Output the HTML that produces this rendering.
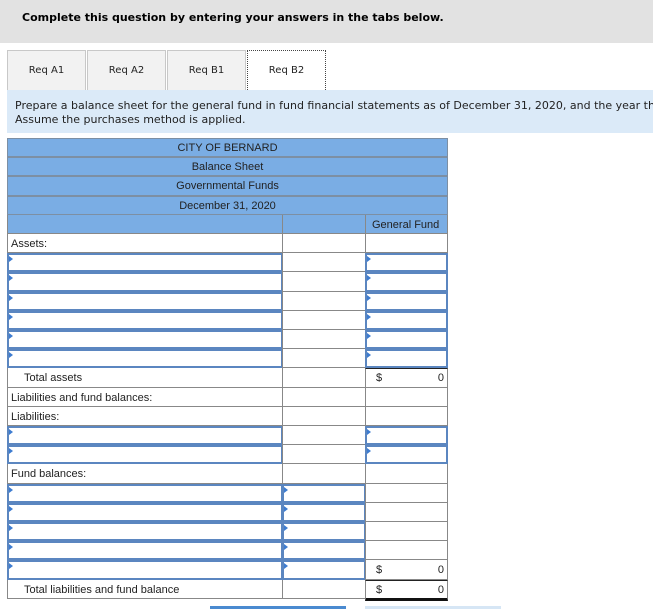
<!DOCTYPE html>
<html><head><style>
body{margin:0;width:653px;height:609px;overflow:hidden;background:#fff;font-family:"Liberation Sans",Arial,sans-serif;position:relative}
.top{position:absolute;left:0;top:0;width:653px;height:43px;background:#e2e2e2}
.top b{position:absolute;left:22px;top:11px;font-family:"DejaVu Sans",Verdana,sans-serif;font-size:11px}
.tab{position:absolute;top:50px;height:39px;width:77px;border:1px solid #c8c8c8;border-bottom:none;background:#f2f2f2;font-family:"DejaVu Sans",Verdana,sans-serif;font-size:10px;text-align:center;line-height:40px;color:#222}
.tab.act{background:#fff;border:1px dotted #444;border-bottom:none}
.info{position:absolute;left:7px;top:90px;width:646px;height:43px;background:#dbeaf8;font-family:"DejaVu Sans",Verdana,sans-serif;font-size:11px;line-height:14px;color:#222;white-space:nowrap;overflow:hidden}
.info div{padding:9px 0 0 8px}
.r{position:absolute;left:7px;width:441px;height:19.2px;font-size:11px;color:#222}
.h{background:#7aade4;border:1px solid #7d8fa3;box-sizing:border-box;text-align:center;line-height:19px;color:#222}
.c{position:absolute;top:0;height:19.2px;box-sizing:border-box;border:1px solid #888;border-top:none}
.c1{left:0;width:276px}.c2{left:275px;width:84px}.c3{left:358px;width:83px}
.in{border:2px solid #5b86c0;background:#fff}
.in::before{content:"";position:absolute;left:0;top:1px;border-left:4px solid #3d7cd0;border-top:3px solid transparent;border-bottom:3px solid transparent}
.t{position:absolute;top:4px;white-space:nowrap}
</style></head><body>
<div class="top"><b>Complete this question by entering your answers in the tabs below.</b></div>
<div class="tab" style="left:7px">Req A1</div>
<div class="tab" style="left:87px">Req A2</div>
<div class="tab" style="left:167px">Req B1</div>
<div class="tab act" style="left:247px">Req B2</div>
<div class="info"><div>Prepare a balance sheet for the general fund in fund financial statements as of December 31, 2020, and the year then ended.<br>Assume the purchases method is applied.</div></div>

<div class="r h" style="top:138px">CITY OF BERNARD</div>
<div class="r h" style="top:157.2px">Balance Sheet</div>
<div class="r h" style="top:176.4px">Governmental Funds</div>
<div class="r h" style="top:195.6px">December 31, 2020</div>
<div class="r" style="top:214.8px"><div class="c c1" style="background:#7aade4"></div><div class="c c2" style="background:#7aade4"></div><div class="c c3" style="background:#7aade4"><span class="t" style="left:6px">General Fund</span></div></div>

<div class="r" style="top:234px"><div class="c c1"><span class="t" style="left:3px">Assets:</span></div><div class="c c2"></div><div class="c c3"></div></div>
<div class="r" style="top:253.2px"><div class="c c1 in"></div><div class="c c2"></div><div class="c c3 in"></div></div>
<div class="r" style="top:272.4px"><div class="c c1 in"></div><div class="c c2"></div><div class="c c3 in"></div></div>
<div class="r" style="top:291.6px"><div class="c c1 in"></div><div class="c c2"></div><div class="c c3 in"></div></div>
<div class="r" style="top:310.8px"><div class="c c1 in"></div><div class="c c2"></div><div class="c c3 in"></div></div>
<div class="r" style="top:330px"><div class="c c1 in"></div><div class="c c2"></div><div class="c c3 in"></div></div>
<div class="r" style="top:349.2px"><div class="c c1 in"></div><div class="c c2"></div><div class="c c3 in"></div></div>
<div class="r" style="top:368.4px"><div class="c c1"><span class="t" style="left:16px">Total assets</span></div><div class="c c2"></div><div class="c c3" style="border-top:1px solid #222"><span class="t" style="left:10px;top:3px">$</span><span class="t" style="right:3px;top:3px">0</span></div></div>
<div class="r" style="top:387.6px"><div class="c c1"><span class="t" style="left:3px">Liabilities and fund balances:</span></div><div class="c c2"></div><div class="c c3"></div></div>
<div class="r" style="top:406.8px"><div class="c c1"><span class="t" style="left:3px">Liabilities:</span></div><div class="c c2"></div><div class="c c3"></div></div>
<div class="r" style="top:426px"><div class="c c1 in"></div><div class="c c2"></div><div class="c c3 in"></div></div>
<div class="r" style="top:445.2px"><div class="c c1 in"></div><div class="c c2"></div><div class="c c3 in"></div></div>
<div class="r" style="top:464.4px"><div class="c c1"><span class="t" style="left:3px">Fund balances:</span></div><div class="c c2"></div><div class="c c3"></div></div>
<div class="r" style="top:483.6px"><div class="c c1 in"></div><div class="c c2 in"></div><div class="c c3"></div></div>
<div class="r" style="top:502.8px"><div class="c c1 in"></div><div class="c c2 in"></div><div class="c c3"></div></div>
<div class="r" style="top:522px"><div class="c c1 in"></div><div class="c c2 in"></div><div class="c c3"></div></div>
<div class="r" style="top:541.2px"><div class="c c1 in"></div><div class="c c2 in"></div><div class="c c3"></div></div>
<div class="r" style="top:560.4px"><div class="c c1 in"></div><div class="c c2 in"></div><div class="c c3"><span class="t" style="left:10px">$</span><span class="t" style="right:3px">0</span></div></div>
<div class="r" style="top:579.6px"><div class="c c1"><span class="t" style="left:16px">Total liabilities and fund balance</span></div><div class="c c2"></div><div class="c c3" style="border-top:1px solid #222;border-bottom:3px solid #111;height:21px"><span class="t" style="left:10px;top:3px">$</span><span class="t" style="right:3px;top:3px">0</span></div></div>

<div style="position:absolute;left:210px;top:606px;width:136px;height:3px;background:#4a8ad0"></div>
<div style="position:absolute;left:365px;top:606px;width:136px;height:3px;background:#d6e6f5"></div>
</body></html>
